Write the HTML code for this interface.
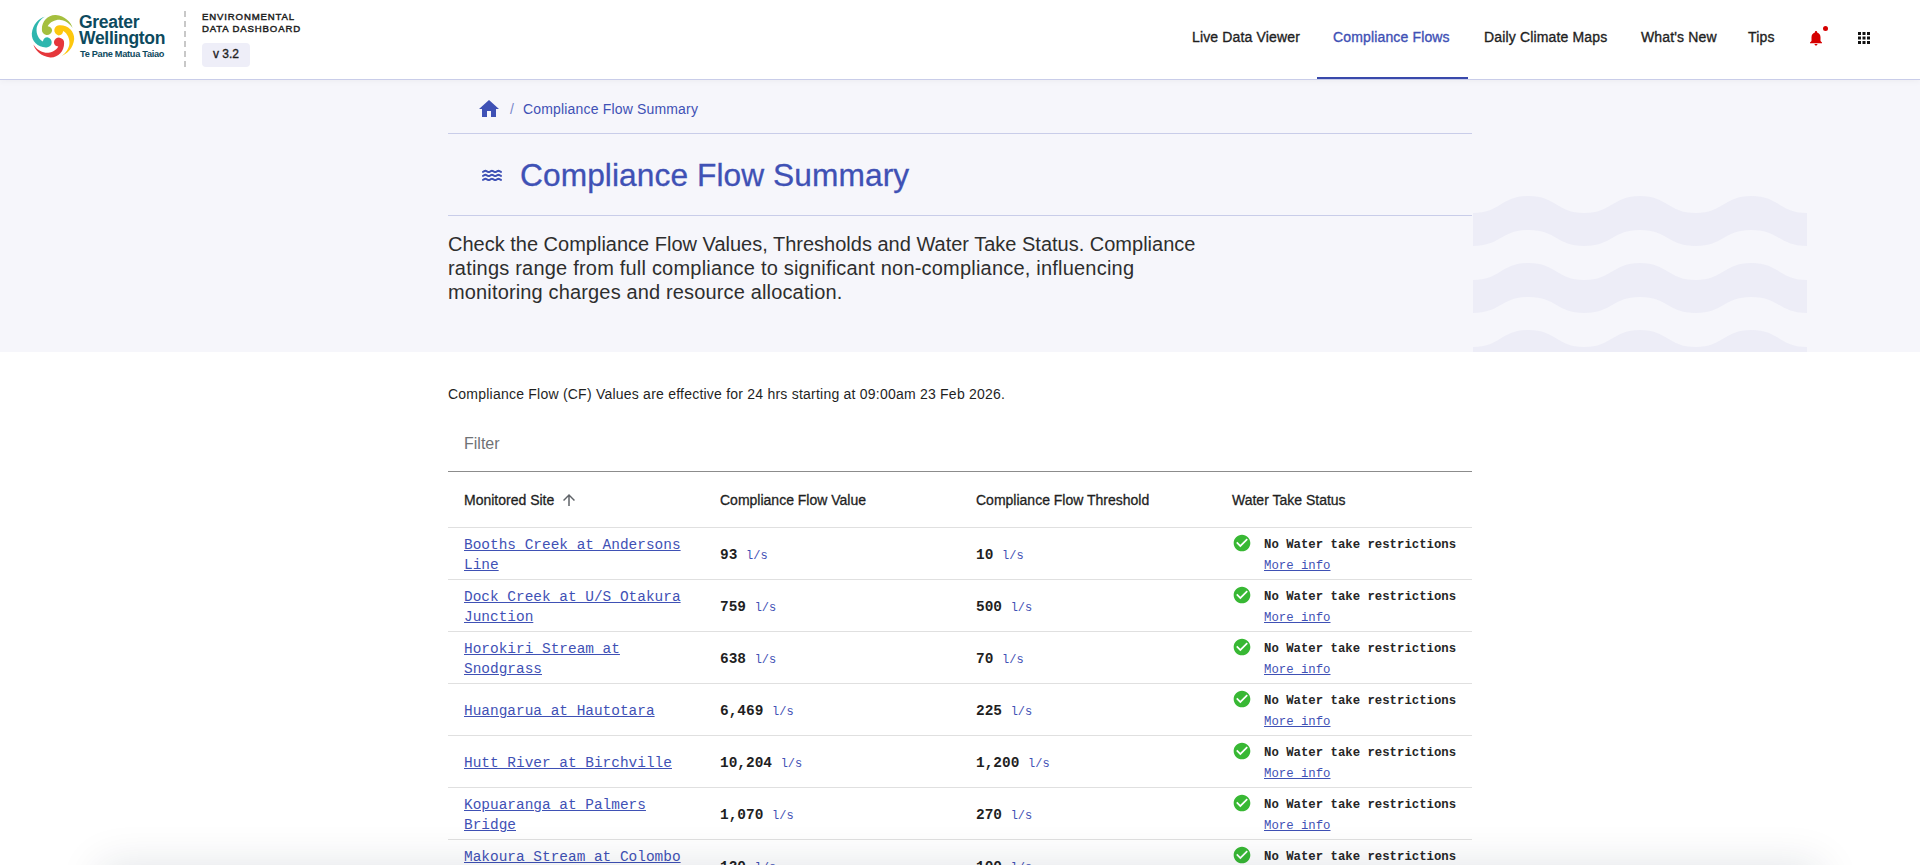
<!DOCTYPE html>
<html>
<head>
<meta charset="utf-8">
<style>
*{box-sizing:border-box;margin:0;padding:0}
html,body{width:1920px;height:865px;overflow:hidden;background:#fff;font-family:"Liberation Sans",sans-serif;color:rgba(0,0,0,.87)}
.abs{position:absolute;white-space:nowrap}
#hdr{position:absolute;left:0;top:0;width:1920px;height:80px;background:#fff;border-bottom:1px solid #c9cde9;box-shadow:0 2px 6px rgba(0,0,0,.035);z-index:2}
#hero{position:absolute;left:0;top:80px;width:1920px;height:272px;background:#f6f6fb;overflow:hidden}
.nav{position:absolute;top:27px;font-size:14px;font-weight:normal;line-height:20px;color:#1f1f1f;letter-spacing:0.15px;-webkit-text-stroke:0.35px currentColor}
.nav.active{color:#3f51b5}
.hline{position:absolute;height:1px;background:#c9cde9}
.mono{font-family:"Liberation Mono",monospace}
.row{position:absolute;left:448px;width:1024px;height:52px;border-bottom:1px solid #e0e0e0}
.site{position:absolute;left:16px;font-family:"Liberation Mono",monospace;font-size:14.45px;line-height:20px;color:#3f51b5;text-decoration:underline;white-space:nowrap}
.val{position:absolute;font-family:"Liberation Mono",monospace;font-size:14.45px;font-weight:bold;line-height:20px;color:#1f1f1f;top:17px;white-space:nowrap}
.val span{font-size:12px;font-weight:normal;color:#3f51b5}
.status{position:absolute;left:816px;top:7px;font-family:"Liberation Mono",monospace;font-size:12.32px;line-height:21px;white-space:nowrap}
.status b{color:#262626}
.status a{color:#3f51b5;text-decoration:underline}
.chk{position:absolute;left:784px;top:5px;width:20px;height:20px}
</style>
</head>
<body>
<div id="hdr">
  <!-- logo -->
  <svg class="abs" style="left:0;top:0" width="180" height="80" viewBox="0 0 180 80">
    
    <g transform="translate(53,36.3)">
      <path d="M19.6 -8.3 C18 -14 12 -20.3 2.8 -21.2 C-5 -21.6 -11.2 -15 -11.1 -7 A5.15 5.15 0 0 0 -0.9 -5.6 Q-1 -9.6 -5.3 -10.1 C-3 -14.6 3 -16.9 7.6 -16.4 C12 -15.9 17 -12.8 19.6 -8.3 Z" fill="#a5bf3e"/>
      <path d="M19.6 -8.3 C18 -14 12 -20.3 2.8 -21.2 C-5 -21.6 -11.2 -15 -11.1 -7 A5.15 5.15 0 0 0 -0.9 -5.6 Q-1 -9.6 -5.3 -10.1 C-3 -14.6 3 -16.9 7.6 -16.4 C12 -15.9 17 -12.8 19.6 -8.3 Z" transform="rotate(90)" fill="#fdc70e"/>
      <path d="M19.6 -8.3 C18 -14 12 -20.3 2.8 -21.2 C-5 -21.6 -11.2 -15 -11.1 -7 A5.15 5.15 0 0 0 -0.9 -5.6 Q-1 -9.6 -5.3 -10.1 C-3 -14.6 3 -16.9 7.6 -16.4 C12 -15.9 17 -12.8 19.6 -8.3 Z" transform="rotate(180)" fill="#e5373b"/>
      <path d="M19.6 -8.3 C18 -14 12 -20.3 2.8 -21.2 C-5 -21.6 -11.2 -15 -11.1 -7 A5.15 5.15 0 0 0 -0.9 -5.6 Q-1 -9.6 -5.3 -10.1 C-3 -14.6 3 -16.9 7.6 -16.4 C12 -15.9 17 -12.8 19.6 -8.3 Z" transform="rotate(270)" fill="#2eb6ae"/>
    </g>
  </svg>
  <div class="abs" style="left:79px;top:14.1px;font-size:17.5px;font-weight:bold;line-height:16.2px;letter-spacing:-0.3px;color:#0d4a5e">Greater<br>Wellington</div>
  <div class="abs" style="left:80px;top:48.8px;font-size:9.2px;font-weight:bold;line-height:10px;letter-spacing:-0.28px;color:#0d4a5e">Te Pane Matua Taiao</div>
  <div class="abs" style="left:184px;top:11px;width:2px;height:56px;background:repeating-linear-gradient(to bottom,#c8c8c8 0,#c8c8c8 6px,transparent 6px,transparent 10px)"></div>
  <div class="abs" style="left:202px;top:11.3px;font-size:9.6px;font-weight:normal;-webkit-text-stroke:0.45px currentColor;line-height:11.7px;letter-spacing:0.85px;color:#1f1f1f">ENVIRONMENTAL<br>DATA DASHBOARD</div>
  <div class="abs" style="left:202px;top:43px;width:48px;height:24px;border-radius:4px;background:#eeeef8;font-size:12px;font-weight:normal;-webkit-text-stroke:0.35px currentColor;line-height:23px;text-align:center;color:#1f1f1f">v 3.2</div>

  <div class="nav" style="left:1192px">Live Data Viewer</div>
  <div class="nav active" style="left:1333px">Compliance Flows</div>
  <div class="abs" style="left:1317px;top:77px;width:151px;height:2px;background:#3949ab"></div>
  <div class="nav" style="left:1484px">Daily Climate Maps</div>
  <div class="nav" style="left:1641px">What's New</div>
  <div class="nav" style="left:1748px">Tips</div>
  <!-- bell -->
  <svg class="abs" style="left:1807px;top:29px" width="18" height="18" viewBox="0 0 24 24"><path fill="#d50000" d="M12 22c1.1 0 2-.9 2-2h-4c0 1.1.9 2 2 2zm6-6v-5c0-3.07-1.64-5.64-4.5-6.32V4c0-.83-.67-1.5-1.5-1.5s-1.5.67-1.5 1.5v.68C7.63 5.36 6 7.92 6 11v5l-2 2v1h16v-1l-2-2z"/></svg>
  <div class="abs" style="left:1823px;top:26px;width:5px;height:5px;border-radius:50%;background:#d50000"></div>
  <!-- apps grid -->
  <svg class="abs" style="left:1858px;top:32px" width="13" height="13" viewBox="0 0 13 13" fill="#111">
    <rect x="0" y="0" width="3" height="3"/><rect x="4.5" y="0" width="3" height="3"/><rect x="9" y="0" width="3" height="3"/>
    <rect x="0" y="4.5" width="3" height="3"/><rect x="4.5" y="4.5" width="3" height="3"/><rect x="9" y="4.5" width="3" height="3"/>
    <rect x="0" y="9" width="3" height="3"/><rect x="4.5" y="9" width="3" height="3"/><rect x="9" y="9" width="3" height="3"/>
  </svg>
</div>

<div id="hero">
  <!-- waves bg -->
  <svg class="abs" style="left:1473px;top:110px" width="334" height="162" viewBox="0 0 334 162">
    
    <path d="M0 23 C27.8 23 27.8 6 55.7 6 C83.5 6 83.5 23 111.3 23 C139.2 23 139.2 6 167 6 C194.8 6 194.8 23 222.7 23 C250.5 23 250.5 6 278.3 6 C306.2 6 306.2 23 334 23 L334 56 C306.2 56 306.2 40 278.3 40 C250.5 40 250.5 56 222.7 56 C194.8 56 194.8 40 167 40 C139.2 40 139.2 56 111.3 56 C83.5 56 83.5 40 55.7 40 C27.8 40 27.8 56 0 56 Z" fill="#ededf7"/>
    <path d="M0 23 C27.8 23 27.8 6 55.7 6 C83.5 6 83.5 23 111.3 23 C139.2 23 139.2 6 167 6 C194.8 6 194.8 23 222.7 23 C250.5 23 250.5 6 278.3 6 C306.2 6 306.2 23 334 23 L334 56 C306.2 56 306.2 40 278.3 40 C250.5 40 250.5 56 222.7 56 C194.8 56 194.8 40 167 40 C139.2 40 139.2 56 111.3 56 C83.5 56 83.5 40 55.7 40 C27.8 40 27.8 56 0 56 Z" transform="translate(0,67)" fill="#ededf7"/>
    <path d="M0 23 C27.8 23 27.8 6 55.7 6 C83.5 6 83.5 23 111.3 23 C139.2 23 139.2 6 167 6 C194.8 6 194.8 23 222.7 23 C250.5 23 250.5 6 278.3 6 C306.2 6 306.2 23 334 23 L334 56 C306.2 56 306.2 40 278.3 40 C250.5 40 250.5 56 222.7 56 C194.8 56 194.8 40 167 40 C139.2 40 139.2 56 111.3 56 C83.5 56 83.5 40 55.7 40 C27.8 40 27.8 56 0 56 Z" transform="translate(0,134)" fill="#ededf7"/>
  </svg>
  <!-- home icon -->
  <svg class="abs" style="left:477px;top:17px" width="24" height="24" viewBox="0 0 24 24"><path fill="#3f51b5" d="M10 20v-6h4v6h5v-8h3L12 3 2 12h3v8z"/></svg>
  <div class="abs" style="left:510px;top:19px;font-size:14px;line-height:20px;color:#7986cb">/</div>
  <div class="abs" style="left:523px;top:19px;font-size:14px;line-height:20px;letter-spacing:0.17px;color:#3f51b5">Compliance Flow Summary</div>
  <div class="hline" style="left:448px;top:53px;width:1024px"></div>
  <!-- waves icon -->
  <svg class="abs" style="left:476px;top:82px" width="32" height="28" viewBox="0 0 32 28"><path fill="none" stroke="#3f51b5" stroke-width="2" stroke-linecap="round" stroke-linejoin="round" d="M7.00 9.85 L7.30 9.71 L7.60 9.54 L7.90 9.37 L8.20 9.21 L8.50 9.06 L8.80 8.95 L9.10 8.87 L9.40 8.85 L9.70 8.87 L10.00 8.95 L10.30 9.06 L10.60 9.21 L10.90 9.37 L11.20 9.54 L11.50 9.71 L11.80 9.85 L12.10 9.96 L12.40 10.03 L12.70 10.05 L13.00 10.02 L13.30 9.95 L13.60 9.83 L13.90 9.68 L14.20 9.51 L14.50 9.34 L14.80 9.18 L15.10 9.04 L15.40 8.93 L15.70 8.87 L16.00 8.85 L16.30 8.88 L16.60 8.96 L16.90 9.08 L17.20 9.23 L17.50 9.40 L17.80 9.57 L18.10 9.73 L18.40 9.87 L18.70 9.98 L19.00 10.04 L19.30 10.05 L19.60 10.01 L19.90 9.93 L20.20 9.81 L20.50 9.65 L20.80 9.49 L21.10 9.31 L21.40 9.15 L21.70 9.02 L22.00 8.92 L22.30 8.86 L22.60 8.85 L22.90 8.89 L23.20 8.98 L23.50 9.11 L23.80 9.26 L24.10 9.43 L24.40 9.60 L24.70 9.76 L25.00 9.89 M7.00 13.85 L7.30 13.71 L7.60 13.54 L7.90 13.37 L8.20 13.21 L8.50 13.06 L8.80 12.95 L9.10 12.87 L9.40 12.85 L9.70 12.87 L10.00 12.95 L10.30 13.06 L10.60 13.21 L10.90 13.37 L11.20 13.54 L11.50 13.71 L11.80 13.85 L12.10 13.96 L12.40 14.03 L12.70 14.05 L13.00 14.02 L13.30 13.95 L13.60 13.83 L13.90 13.68 L14.20 13.51 L14.50 13.34 L14.80 13.18 L15.10 13.04 L15.40 12.93 L15.70 12.87 L16.00 12.85 L16.30 12.88 L16.60 12.96 L16.90 13.08 L17.20 13.23 L17.50 13.40 L17.80 13.57 L18.10 13.73 L18.40 13.87 L18.70 13.98 L19.00 14.04 L19.30 14.05 L19.60 14.01 L19.90 13.93 L20.20 13.81 L20.50 13.65 L20.80 13.49 L21.10 13.31 L21.40 13.15 L21.70 13.02 L22.00 12.92 L22.30 12.86 L22.60 12.85 L22.90 12.89 L23.20 12.98 L23.50 13.11 L23.80 13.26 L24.10 13.43 L24.40 13.60 L24.70 13.76 L25.00 13.89 M7.00 17.85 L7.30 17.71 L7.60 17.54 L7.90 17.37 L8.20 17.21 L8.50 17.06 L8.80 16.95 L9.10 16.87 L9.40 16.85 L9.70 16.87 L10.00 16.95 L10.30 17.06 L10.60 17.21 L10.90 17.37 L11.20 17.54 L11.50 17.71 L11.80 17.85 L12.10 17.96 L12.40 18.03 L12.70 18.05 L13.00 18.02 L13.30 17.95 L13.60 17.83 L13.90 17.68 L14.20 17.51 L14.50 17.34 L14.80 17.18 L15.10 17.04 L15.40 16.93 L15.70 16.87 L16.00 16.85 L16.30 16.88 L16.60 16.96 L16.90 17.08 L17.20 17.23 L17.50 17.40 L17.80 17.57 L18.10 17.73 L18.40 17.87 L18.70 17.98 L19.00 18.04 L19.30 18.05 L19.60 18.01 L19.90 17.93 L20.20 17.81 L20.50 17.65 L20.80 17.49 L21.10 17.31 L21.40 17.15 L21.70 17.02 L22.00 16.92 L22.30 16.86 L22.60 16.85 L22.90 16.89 L23.20 16.98 L23.50 17.11 L23.80 17.26 L24.10 17.43 L24.40 17.60 L24.70 17.76 L25.00 17.89"/></svg>
  <div class="abs" style="left:520px;top:75px;font-size:31.7px;line-height:40px;letter-spacing:0.08px;-webkit-text-stroke:0.3px currentColor;color:#3f51b5">Compliance Flow Summary</div>
  <div class="hline" style="left:448px;top:135px;width:1024px"></div>
  <div class="abs" style="left:448px;top:152px;font-size:20px;line-height:24px;color:#2e2e2e">Check the Compliance Flow Values, Thresholds and Water Take Status. Compliance<br><span style="letter-spacing:0.206px">ratings range from full compliance to significant non-compliance, influencing</span><br><span style="letter-spacing:0.15px">monitoring charges and resource allocation.</span></div>
</div>

<div class="abs" style="left:448px;top:384px;font-size:14px;line-height:20px;letter-spacing:0.226px;color:#1f1f1f">Compliance Flow (CF) Values are effective for 24 hrs starting at 09:00am 23 Feb 2026.</div>
<div class="abs" style="left:464px;top:434px;font-size:16px;line-height:20px;color:#6f7275">Filter</div>
<div class="abs" style="left:448px;top:471px;width:1024px;height:1px;background:#8c8c8c"></div>

<!-- table header -->
<div class="row" style="top:471px;height:57px">
  <div class="abs" style="left:16px;top:19px;font-size:14px;font-weight:normal;-webkit-text-stroke:0.3px currentColor;line-height:20px;color:#1f1f1f">Monitored Site</div>
  <svg class="abs" style="left:112px;top:20px" width="18" height="18" viewBox="0 0 24 24"><path fill="#5f6368" d="M4 12l1.41 1.41L11 7.83V20h2V7.83l5.58 5.59L20 12l-8-8-8 8z"/></svg>
  <div class="abs" style="left:272px;top:19px;font-size:14px;font-weight:normal;-webkit-text-stroke:0.3px currentColor;line-height:20px;color:#1f1f1f">Compliance Flow Value</div>
  <div class="abs" style="left:528px;top:19px;font-size:14px;font-weight:normal;-webkit-text-stroke:0.3px currentColor;line-height:20px;color:#1f1f1f">Compliance Flow Threshold</div>
  <div class="abs" style="left:784px;top:19px;font-size:14px;font-weight:normal;-webkit-text-stroke:0.3px currentColor;line-height:20px;color:#1f1f1f">Water Take Status</div>
</div>
<div class="row" style="top:528px">
  <div class="site" style="top:7px">Booths Creek at Andersons<br>Line</div>
  <div class="val" style="left:272px">93 <span>l/s</span></div>
  <div class="val" style="left:528px">10 <span>l/s</span></div>
  <svg class="chk" viewBox="0 0 24 24"><path fill="#38b834" d="M12 2C6.48 2 2 6.48 2 12s4.48 10 10 10 10-4.48 10-10S17.52 2 12 2zm-2 15l-5-5 1.41-1.41L10 14.17l7.59-7.59L19 8l-9 9z"/></svg>
  <div class="status"><b>No Water take restrictions</b><br><a>More info</a></div>
</div>
<div class="row" style="top:580px">
  <div class="site" style="top:7px">Dock Creek at U/S Otakura<br>Junction</div>
  <div class="val" style="left:272px">759 <span>l/s</span></div>
  <div class="val" style="left:528px">500 <span>l/s</span></div>
  <svg class="chk" viewBox="0 0 24 24"><path fill="#38b834" d="M12 2C6.48 2 2 6.48 2 12s4.48 10 10 10 10-4.48 10-10S17.52 2 12 2zm-2 15l-5-5 1.41-1.41L10 14.17l7.59-7.59L19 8l-9 9z"/></svg>
  <div class="status"><b>No Water take restrictions</b><br><a>More info</a></div>
</div>
<div class="row" style="top:632px">
  <div class="site" style="top:7px">Horokiri Stream at<br>Snodgrass</div>
  <div class="val" style="left:272px">638 <span>l/s</span></div>
  <div class="val" style="left:528px">70 <span>l/s</span></div>
  <svg class="chk" viewBox="0 0 24 24"><path fill="#38b834" d="M12 2C6.48 2 2 6.48 2 12s4.48 10 10 10 10-4.48 10-10S17.52 2 12 2zm-2 15l-5-5 1.41-1.41L10 14.17l7.59-7.59L19 8l-9 9z"/></svg>
  <div class="status"><b>No Water take restrictions</b><br><a>More info</a></div>
</div>
<div class="row" style="top:684px">
  <div class="site" style="top:17px">Huangarua at Hautotara</div>
  <div class="val" style="left:272px">6,469 <span>l/s</span></div>
  <div class="val" style="left:528px">225 <span>l/s</span></div>
  <svg class="chk" viewBox="0 0 24 24"><path fill="#38b834" d="M12 2C6.48 2 2 6.48 2 12s4.48 10 10 10 10-4.48 10-10S17.52 2 12 2zm-2 15l-5-5 1.41-1.41L10 14.17l7.59-7.59L19 8l-9 9z"/></svg>
  <div class="status"><b>No Water take restrictions</b><br><a>More info</a></div>
</div>
<div class="row" style="top:736px">
  <div class="site" style="top:17px">Hutt River at Birchville</div>
  <div class="val" style="left:272px">10,204 <span>l/s</span></div>
  <div class="val" style="left:528px">1,200 <span>l/s</span></div>
  <svg class="chk" viewBox="0 0 24 24"><path fill="#38b834" d="M12 2C6.48 2 2 6.48 2 12s4.48 10 10 10 10-4.48 10-10S17.52 2 12 2zm-2 15l-5-5 1.41-1.41L10 14.17l7.59-7.59L19 8l-9 9z"/></svg>
  <div class="status"><b>No Water take restrictions</b><br><a>More info</a></div>
</div>
<div class="row" style="top:788px">
  <div class="site" style="top:7px">Kopuaranga at Palmers<br>Bridge</div>
  <div class="val" style="left:272px">1,070 <span>l/s</span></div>
  <div class="val" style="left:528px">270 <span>l/s</span></div>
  <svg class="chk" viewBox="0 0 24 24"><path fill="#38b834" d="M12 2C6.48 2 2 6.48 2 12s4.48 10 10 10 10-4.48 10-10S17.52 2 12 2zm-2 15l-5-5 1.41-1.41L10 14.17l7.59-7.59L19 8l-9 9z"/></svg>
  <div class="status"><b>No Water take restrictions</b><br><a>More info</a></div>
</div>
<div class="row" style="top:840px">
  <div class="site" style="top:7px">Makoura Stream at Colombo<br>Road</div>
  <div class="val" style="left:272px">120 <span>l/s</span></div>
  <div class="val" style="left:528px">100 <span>l/s</span></div>
  <svg class="chk" viewBox="0 0 24 24"><path fill="#38b834" d="M12 2C6.48 2 2 6.48 2 12s4.48 10 10 10 10-4.48 10-10S17.52 2 12 2zm-2 15l-5-5 1.41-1.41L10 14.17l7.59-7.59L19 8l-9 9z"/></svg>
  <div class="status"><b>No Water take restrictions</b><br><a>More info</a></div>
</div>
<div style="position:fixed;left:100px;top:865px;width:1720px;height:120px;background:#fff;box-shadow:0 0 44px rgba(20,30,60,.12);z-index:5"></div>
</body>
</html>
